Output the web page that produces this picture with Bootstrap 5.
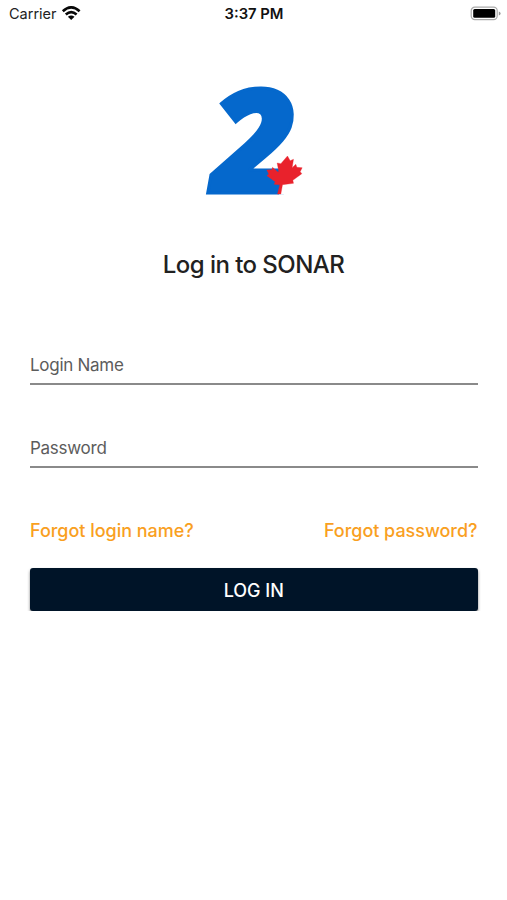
<!DOCTYPE html>
<html lang="en">
<head>
<meta charset="utf-8">
<meta name="viewport" content="width=device-width, initial-scale=1">
<title>Log in to SONAR</title>
<link href="https://cdn.jsdelivr.net/npm/bootstrap@5.3.0/dist/css/bootstrap.min.css" rel="stylesheet">
<style>
body{font-family:Inter,"Liberation Sans",sans-serif;background:#fff;color:#212121}
.status{height:28px;font-size:14.5px;line-height:28px;padding:0 6px 0 9px;color:#222}
.status-time{font-size:14.8px;font-weight:600;color:#111;margin-right:2px}
.status svg{display:block}
.brand{margin-top:52px;height:125px}
.brand svg{display:block;margin:0 auto;overflow:visible}
.brand text{font:italic 800 145px "Open Sans",sans-serif}
h1{font-size:24px;font-weight:500;line-height:31px;letter-spacing:-.55px;margin:44px 0 0}
.login-form{padding:0 29.5px 0 30px;margin-top:59px}
.line-field{height:46px;margin-bottom:37px}
.line-field>.form-control{height:46px;min-height:46px;padding:8px 0;border:0;border-bottom:2px solid #8a8a8a;border-radius:0;box-shadow:none}
.line-field>label{padding:0;height:46px;line-height:52px;font-size:17px;letter-spacing:-.27px;color:#5c5c5c;border:0}
.links{font-size:18px;font-weight:500;line-height:24px;padding-top:1px;margin-top:50px;letter-spacing:-.03px}
.links a{color:#f9a01f}
.btn-login{height:43px;margin-top:25px;background:#001428;color:#fff;border:0;border-radius:3px;font-size:18px;font-weight:500;line-height:41px;padding:2px 0 0;box-shadow:0 2px 3px rgba(0,0,0,.5)}
</style>
<script src="https://cdn.jsdelivr.net/npm/bootstrap@5.3.0/dist/js/bootstrap.bundle.min.js"></script>
</head>
<body>
<header class="status row g-0 align-items-center">
<div class="col d-flex align-items-center">Carrier
<svg class="ms-1" width="20" height="16" viewBox="0 0 20 16" fill="none" stroke="#080808" stroke-width="2.6"><path d="M1.8 5.2Q10.2-2.5 18.6 5.2"/><path d="M4.8 8.5Q10.2 3.8 15.6 8.5"/><path d="M10.2 13.9 6.9 10.7Q10.2 8.1 13.5 10.7Z" fill="#080808" stroke="none"/></svg>
</div>
<div class="col-auto status-time">3:37 PM</div>
<div class="col d-flex justify-content-end">
<svg width="31" height="16" viewBox="0 0 31 16"><rect x="1.2" y="1.2" width="26" height="12.4" rx="3.6" fill="#fff" stroke="#aaa" stroke-width="1.2"/><rect x="3.2" y="3.1" width="22" height="8.6" rx="1.5" fill="#000"/><path d="M28.8 5.4V9.4Q30.6 8.8 30.6 7.4T28.8 5.4Z" fill="#999"/></svg>
</div>
</header>
<main>
<div class="brand">
<svg width="120" height="125" viewBox="0 0 120 125">
<text transform="translate(18 112.5) skewX(2) scale(1.05 1)" fill="#0568cc" stroke="#0568cc" stroke-width="3">2</text>
<path fill="#fff" d="M85 114.8 89 100H96V114.8Z"/>
<path transform="translate(1.5 -5) scale(.33333)" fill="#e9222c" stroke="#e9222c" stroke-width="1" d="M276 243 284 257 294 253 290 278 301 268 304 277 320 278 314 290 319 296 292 316 294 325 261 329 256 357H246L253 329 236 328 239 320 214 302 220 297 214 285 229 284 231 277 246 290 250 290 245 264 256 266Z"/>
</svg>
</div>
<h1 class="text-center">Log in to SONAR</h1>
<form class="login-form">
<div class="form-floating line-field"><input class="form-control" id="login" placeholder=" "><label for="login">Login Name</label></div>
<div class="form-floating line-field"><input type="password" class="form-control" id="pw" placeholder=" "><label for="pw">Password</label></div>
<div class="links d-flex justify-content-between"><a href="#" class="text-decoration-none">Forgot login name?</a><a href="#" class="text-decoration-none">Forgot password?</a></div>
<button type="button" class="btn btn-login w-100">LOG IN</button>
</form>
</main>
</body>
</html>
